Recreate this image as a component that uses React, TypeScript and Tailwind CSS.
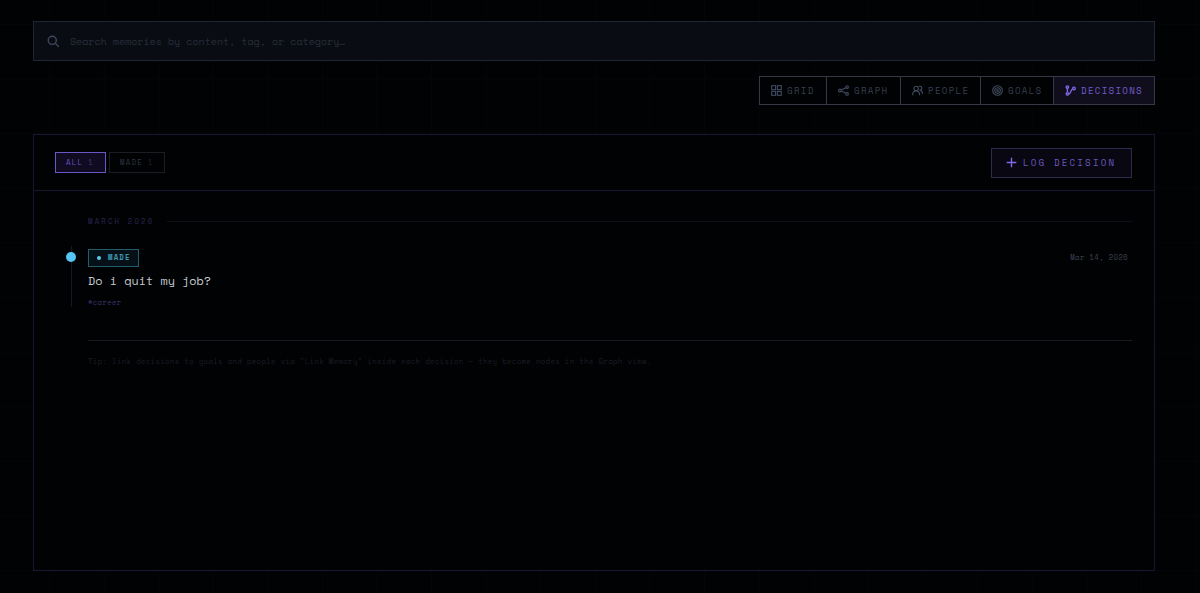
import React from 'react';

const icons = {
  search: (
    <>
      <circle cx="6.5" cy="6.5" r="5" />
      <path d="M10.3 10.3 14.5 14.5" />
    </>
  ),
  grid: (
    <>
      <rect x="1" y="1" width="5.7" height="5.7" />
      <rect x="9.3" y="1" width="5.7" height="5.7" />
      <rect x="1" y="9.3" width="5.7" height="5.7" />
      <rect x="9.3" y="9.3" width="5.7" height="5.7" />
    </>
  ),
  graph: (
    <>
      <circle cx="2.8" cy="8" r="2" />
      <circle cx="13.2" cy="3" r="1.9" />
      <circle cx="13.2" cy="13" r="1.9" />
      <path d="M4.6 7.1 11.4 3.9M4.6 8.9l6.8 3.2" />
    </>
  ),
  people: (
    <>
      <circle cx="6" cy="5" r="3.2" />
      <path d="M.8 15c0-4 2-6.3 5.2-6.3s5.2 2.3 5.2 6.3" />
      <path d="M10.2 2.2a2.8 2.8 0 1 1 .8 5.3c2.6.3 4.2 2.3 4.2 5.5" />
    </>
  ),
  goals: (
    <>
      <circle cx="8" cy="8" r="7" />
      <circle cx="8" cy="8" r="4.1" />
      <circle cx="8" cy="8" r="1.2" />
    </>
  ),
  branch: (
    <>
      <circle cx="3.5" cy="3" r="1.7" />
      <circle cx="3.5" cy="13" r="1.7" />
      <circle cx="13" cy="5" r="1.9" />
      <path d="M3.5 5v6M5.2 12.7c4.6 0 2.2-6.2 6-7" />
    </>
  ),
  plus: <path d="M8 1v14M1 8h14" />
};

function Icon({ name, className, stroke = 1.5 }: { name: keyof typeof icons; className: string; stroke?: number }) {
  return (
    <svg viewBox="0 0 16 16" fill="none" stroke="currentColor" strokeWidth={stroke} className={className}>
      {icons[name]}
    </svg>
  );
}

const tabs = [
  { label: 'GRID', icon: 'grid', width: 'w-[66px]' },
  { label: 'GRAPH', icon: 'graph', width: 'w-[74px]' },
  { label: 'PEOPLE', icon: 'people', width: 'w-[80px]' },
  { label: 'GOALS', icon: 'goals', width: 'w-[73px]' },
  { label: 'DECISIONS', icon: 'branch', width: 'w-[101px]', active: true }
] as const;

export default function App() {
  return (
    <div className="h-[593px] overflow-hidden bg-[#010204] bg-[linear-gradient(#030508_1px,transparent_1px),linear-gradient(90deg,#030508_1px,transparent_1px)] bg-[size:54.6px_54.6px] bg-[position:49px_24px] pl-[33px] pr-[45px] pt-[21px] font-['Space_Mono','Liberation_Mono',monospace]">
      <label className="flex h-10 items-center border border-[#1f2633] bg-[#0a0c14] pl-[13px]">
        <Icon name="search" className="h-[13px] w-[13px] text-[#3d495b]" stroke={1.7} />
        <span className="ml-[10px] text-[10.01px] leading-[15px] text-[#272d38]">
          Search memories by content, tag, or category…
        </span>
      </label>

      <nav className="ml-auto mt-[15px] flex h-[29px] w-[396px] border border-[#353845] bg-[#010204]">
        {tabs.map((tab, index) => (
          <button
            key={tab.label}
            className={`flex shrink-0 items-center pl-[11px] text-[9.1px] tracking-[1.32px] ${tab.width} ${index ? 'border-l border-[#353845]' : ''} ${'active' in tab ? 'bg-[#100e1d] text-[#705acb]' : 'text-[#373f4d]'}`}
          >
            <Icon
              name={tab.icon}
              className={`mr-[5px] h-[11px] w-[11px] shrink-0 ${'active' in tab ? 'text-[#7d64e2]' : 'text-[#414c5e]'}`}
              stroke={'active' in tab ? 2.1 : 1.6}
            />
            {tab.label}
          </button>
        ))}
      </nav>

      <main className="mt-[29px] h-[437px] border border-[#17182f] bg-[#010204]">
        <header className="flex h-[56px] items-center justify-between border-b border-[#17182f] pl-[21px] pr-[22px]">
          <div className="flex gap-[3px] text-[7.28px] tracking-[1.31px]">
            <button className="flex h-[21px] w-[51px] items-center border border-[#6b56c4] bg-[#100b20] pl-[10px] pt-px text-[#6b55c2]">
              ALL<span className="ml-[5px] text-[#40347a]">1</span>
            </button>
            <button className="flex h-[21px] w-[56px] items-center border border-[#1a1d24] pl-[10px] pt-px text-[#303742]">
              MADE<span className="ml-[5px] text-[#20252e]">1</span>
            </button>
          </div>
          <button className="flex h-[30px] w-[141px] items-center border border-[#2f294e] bg-[#090812] pl-[14px] text-[9.1px] tracking-[2.2px] text-[#6b57bf]">
            <Icon name="plus" className="mr-[6px] h-[11px] w-[11px] text-[#8068ee]" stroke={2} />
            LOG DECISION
          </button>
        </header>

        <section className="pl-[54px] pr-[22px]">
          <div className="flex h-[61px] items-center">
            <h2 className="pt-px text-[7.28px] tracking-[2.18px] text-[#2b2655]">MARCH 2026</h2>
            <div className="ml-[13px] h-px flex-1 bg-[#0f111a]" />
          </div>

          <article className="relative h-[91px]">
            <div className="absolute -left-[17px] -top-[3px] h-[61px] w-px bg-[#121a25]" />
            <div className="absolute -left-[22px] top-[2.5px] h-[10px] w-[10px] rounded-full bg-[#55c6f3]" />
            <div className="-mt-[3px] flex items-center justify-between">
              <span className="flex h-[18px] w-[51px] items-center border border-[#235d6c] bg-[#051116] pl-[8px] text-[7.28px] font-bold tracking-[1.2px] text-[#4199b3]">
                <i className="mr-[7px] h-1 w-1 rounded-full bg-[#58c9ed]" />
                MADE
              </span>
              <time className="mr-[4px] text-[7.28px] tracking-[0.36px] text-[#3c434f]">Mar 14, 2026</time>
            </div>
            <h3 className="mt-[5px] text-[11.83px] leading-[18px] text-[#c4cad3]">Do i quit my job?</h3>
            <p className="mt-[7px] text-[7.28px] leading-[11px] tracking-[0.36px] text-[#3b3167]">#career</p>
          </article>

          <p className="border-t border-[#181a21] pt-[15px] text-[7.28px] leading-[11px] tracking-[0.37px] text-[#1b1e25]">
            Tip: link decisions to goals and people via "Link Memory" inside each decision — they become nodes in the Graph view.
          </p>
        </section>
      </main>
    </div>
  );
}
